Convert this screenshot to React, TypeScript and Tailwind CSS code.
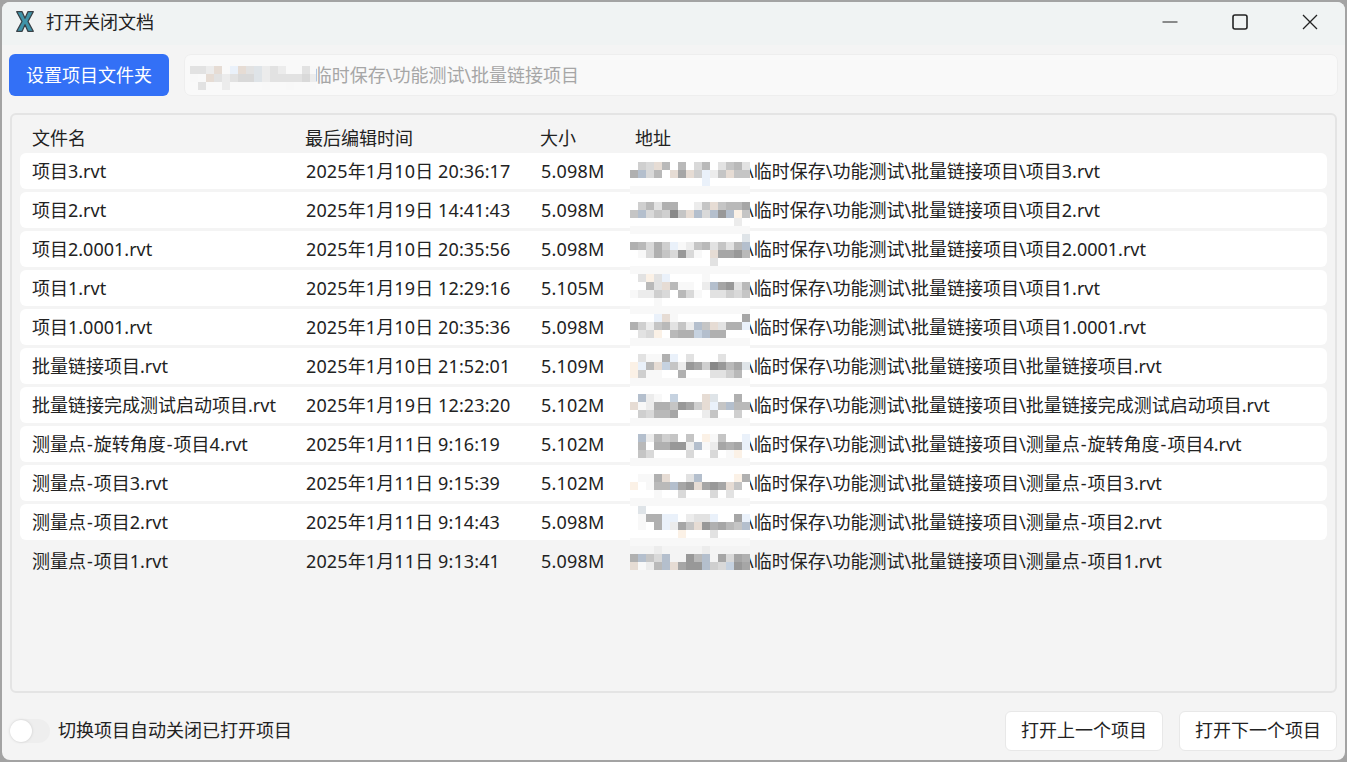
import React from "react";

const FONT = { fontFamily: '"Noto Sans", "Noto Sans CJK SC", sans-serif' };

interface FileRow {
    name: string;
    time: string;
    size: string;
}

const BASE_PATH = "\\临时保存\\功能测试\\批量链接项目";

const files: FileRow[] = [
    { name: "项目3.rvt", time: "2025年1月10日 20:36:17", size: "5.098M" },
    { name: "项目2.rvt", time: "2025年1月19日 14:41:43", size: "5.098M" },
    { name: "项目2.0001.rvt", time: "2025年1月10日 20:35:56", size: "5.098M" },
    { name: "项目1.rvt", time: "2025年1月19日 12:29:16", size: "5.105M" },
    { name: "项目1.0001.rvt", time: "2025年1月10日 20:35:36", size: "5.098M" },
    { name: "批量链接项目.rvt", time: "2025年1月10日 21:52:01", size: "5.109M" },
    { name: "批量链接完成测试启动项目.rvt", time: "2025年1月19日 12:23:20", size: "5.102M" },
    { name: "测量点-旋转角度-项目4.rvt", time: "2025年1月11日 9:16:19", size: "5.102M" },
    { name: "测量点-项目3.rvt", time: "2025年1月11日 9:15:39", size: "5.102M" },
    { name: "测量点-项目2.rvt", time: "2025年1月11日 9:14:43", size: "5.098M" },
    { name: "测量点-项目1.rvt", time: "2025年1月11日 9:13:41", size: "5.098M" },
];

// colours of the blurred cells, one letter per 8px square
const SHADES: Record<string, string> = {
    "1": "#f8f8f8",
    "2": "#ececec",
    "3": "#e2e2e2",
    "4": "#d9d9d9",
    "5": "#cfcfcf",
    "6": "#c5c5c5",
    "7": "#b9b9b9",
    "8": "#b0b0b0",
    "9": "#a6a6a6",
    a: "#989898",
    k: "#888888",
    b: "#b4bfcd",
    q: "#c6d2e0",
    d: "#eaf1fa",
    c: "#e6dcd4",
    w: "#fbf1e6",
    e: "#dfe4e8",
};

const PALE = "111111111111111";

const LIST_MOSAIC: [number, string][] = [
    [162, ".54c7.7.47.3673"],
    [170, "8b47.c9c5d26c66"],
    [178, ".........d....."],
    [186, PALE],
    [202, ".57388..26c6779"],
    [210, "6b465k6cb4babw6"],
    [218, ".............2."],
    [226, PALE],
    [234, "..............e"],
    [242, "87485d12673637b"],
    [250, ".14864a41.c99a7"],
    [258, "..........3...."],
    [266, PALE],
    [274, ".3w3d....1....."],
    [282, "..73c711.2b9a37"],
    [290, "12254.741.33546"],
    [298, "...1..........."],
    [306, PALE],
    [314, "...dc1........9"],
    [322, "85267362b6c388d"],
    [330, ".34w.788qb88..."],
    [338, PALE],
    [354, ".3118d.3...3..."],
    [362, "wd7cq62a95ka79e"],
    [370, "w511..8...3357."],
    [378, PALE],
    [394, ".b21.q...ce..8."],
    [402, "c12886a95cd6b77"],
    [410, ".54779...26..5."],
    [418, PALE],
    [434, ".b2756.6.w16..d"],
    [442, ".7.88aa2b12989d"],
    [450, ".64....4..4.1w."],
    [458, PALE],
    [474, ".118c..3b....w8"],
    [482, "w.177b9ac9a9c6."],
    [490, "...1..4...4.3.."],
    [498, PALE],
    [506, ".e............."],
    [514, ".188dd.233d..9d"],
    [522, ".1.8d296ca8976b"],
    [530, "......w...3...."],
    [538, PALE],
    [546, "...2.....2....."],
    [554, "8b64b..a7b.9498"],
    [562, "c127bc9aab54qa9"],
];

const PATH_MOSAIC: [number, string][] = [
    [0, "332c.dc3e232..31"],
    [8, "1.c32344e2333342"],
    [16, ".3..2....1..1..1"],
];

// list blur: starts at page y 153, white above the last row
const ListMosaic: React.FC = () => (
    <svg width="120" height="420" shapeRendering="crispEdges" className="absolute left-[610px] top-0">
        <rect x="0" y="0" width="120" height="388" fill="#ffffff" />
        {LIST_MOSAIC.map(([y, cells]) =>
            cells.split("").map((c, i) =>
                c === "." ? null : (
                    <rect key={`${y}-${i}`} x={i * 8} y={y - 153} width="8" height="8" fill={SHADES[c]} />
                )
            )
        )}
    </svg>
);

const PathMosaic: React.FC = () => (
    <svg width="126" height="24" shapeRendering="crispEdges" className="absolute left-[5px] top-[11px]">
        <rect x="0" y="0" width="126" height="24" fill="#f9f9f9" />
        {PATH_MOSAIC.map(([y, cells]) =>
            cells.split("").map((c, i) =>
                c === "." ? null : (
                    <rect key={`${y}-${i}`} x={i * 8} y={y} width="8" height="8" fill={SHADES[c]} />
                )
            )
        )}
    </svg>
);

const Logo: React.FC = () => (
    <svg width="18" height="21" viewBox="0 0 18 21" className="shrink-0">
        <path
            d="M0.7 0.7h5.4L9 7.2l2.9-6.5h5.4L12 10.5l5.3 9.8h-5.4L9 13.8l-2.9 6.5H0.7L6 10.5z"
            fill="#3f93a8"
            stroke="#3a4248"
            strokeWidth="1.3"
            strokeLinejoin="round"
        />
    </svg>
);

// the hyphen sits a little wider in the original font
const Dashed: React.FC<{ text: string }> = ({ text }) => (
    <>
        {text.split("-").map((part, i) => (
            <React.Fragment key={i}>
                {i > 0 && <span className="mx-[1px]">-</span>}
                {part}
            </React.Fragment>
        ))}
    </>
);

const App: React.FC = () => {
    return (
        <div className="w-[1347px] h-[762px] bg-[#a3a3a3] p-[2px] text-[18px] text-[#222222]" style={FONT}>
            <div className="w-full h-full rounded-[8px] bg-[#f4f4f4] flex flex-col overflow-hidden">
                {/* title bar */}
                <div className="h-[43px] shrink-0 bg-[#f0f3f3] flex items-center pb-[4px]">
                    <div className="ml-[14px] mr-[12px] flex">
                        <Logo />
                    </div>
                    <span className="leading-none">打开关闭文档</span>
                    <div className="ml-auto flex items-center">
                        <button className="w-[70px] h-[39px] flex items-center justify-center">
                            <svg width="16" height="16" viewBox="0 0 16 16">
                                <path d="M0.5 8h15" stroke="#222" strokeWidth="1.2" fill="none" />
                            </svg>
                        </button>
                        <button className="w-[70px] h-[39px] flex items-center justify-center">
                            <svg width="16" height="16" viewBox="0 0 16 16">
                                <rect x="1" y="1" width="14" height="14" rx="2" stroke="#222" strokeWidth="1.6" fill="none" />
                            </svg>
                        </button>
                        <button className="w-[70px] h-[39px] flex items-center justify-center">
                            <svg width="16" height="16" viewBox="0 0 16 16">
                                <path d="M1 1l14 14M15 1L1 15" stroke="#222" strokeWidth="1.3" fill="none" />
                            </svg>
                        </button>
                    </div>
                </div>

                {/* toolbar */}
                <div className="mt-[9px] ml-[7px] mr-[7px] flex gap-[15px] shrink-0">
                    <button className="w-[160px] h-[42px] rounded-[6px] bg-[#3370f6] text-white pt-[1px]">设置项目文件夹</button>
                    <div className="relative flex-1 h-[42px] rounded-[7px] border border-[#eeeeee] bg-[#f9f9f9] flex items-center pl-[122px] pt-[1px] text-[#a6a6a6]">
                        <span>{BASE_PATH}</span>
                        <PathMosaic />
                    </div>
                </div>

                {/* file list */}
                <div className="mt-[17px] mx-[8px] h-[580px] shrink-0 rounded-[6px] border-2 border-[#e4e4e4] px-[8px]">
                    <div className="grid grid-cols-[273px_235px_95px_1fr] h-[38px] items-start pt-[11px] pl-[12px] leading-[24px]">
                        <span>文件名</span>
                        <span>最后编辑时间</span>
                        <span>大小</span>
                        <span>地址</span>
                    </div>
                    <div className="relative flex flex-col gap-[3px]">
                        {files.map((f, i) => (
                            <div
                                key={f.name}
                                className={`grid grid-cols-[274px_235px_94px_1fr] h-[36px] items-center pl-[12px] rounded-[6px] ${
                                    i === files.length - 1 ? "" : "bg-white"
                                }`}
                            >
                                <span className="whitespace-nowrap">
                                    <Dashed text={f.name} />
                                </span>
                                <span className="whitespace-nowrap tracking-[0.12px]">{f.time}</span>
                                <span className="tracking-[0.2px]">{f.size}</span>
                                <span className="whitespace-nowrap pl-[112px]">
                                    {BASE_PATH}\<Dashed text={f.name} />
                                </span>
                            </div>
                        ))}
                        <ListMosaic />
                    </div>
                </div>

                {/* footer */}
                <div className="flex-1 flex items-center justify-between mx-[8px] pt-[8px]">
                    <div className="flex items-center gap-[8px]">
                        <div className="w-[40px] h-[24px] rounded-full bg-[#eeeeee] flex items-center">
                            <div className="w-[22px] h-[22px] rounded-full bg-white shadow-[0_0_3px_rgba(0,0,0,0.15)]" />
                        </div>
                        <span>切换项目自动关闭已打开项目</span>
                    </div>
                    <div className="flex gap-[16px]">
                        <button className="w-[158px] h-[40px] rounded-[6px] bg-white border border-[#e8e8e8]">打开上一个项目</button>
                        <button className="w-[158px] h-[40px] rounded-[6px] bg-white border border-[#e8e8e8]">打开下一个项目</button>
                    </div>
                </div>
            </div>
        </div>
    );
};

export default App;
